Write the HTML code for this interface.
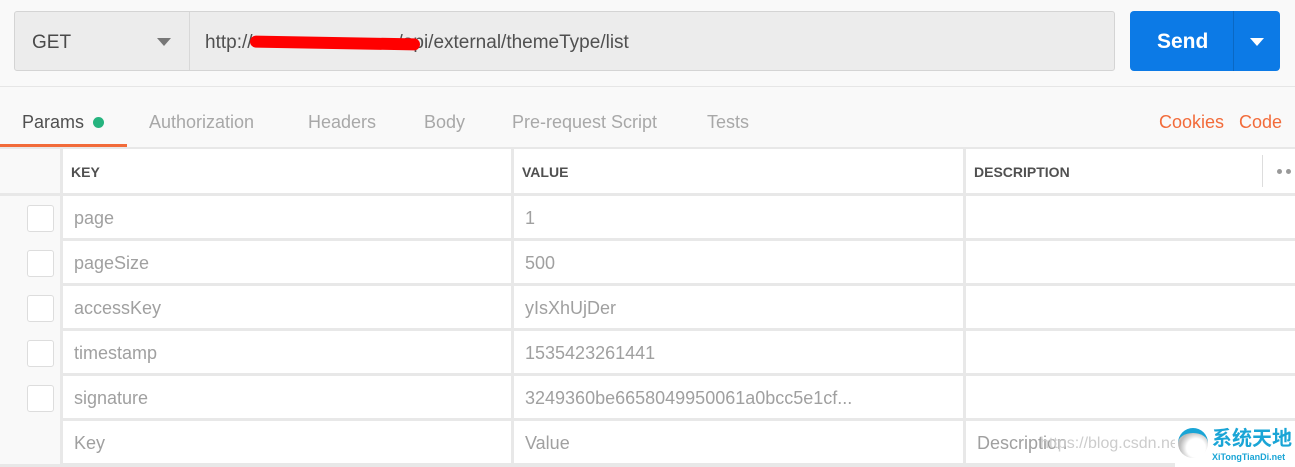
<!DOCTYPE html>
<html><head><meta charset="utf-8"><style>
*{margin:0;padding:0;box-sizing:border-box}
body{width:1295px;height:467px;overflow:hidden;background:#f9f9f9;font-family:"Liberation Sans",sans-serif;position:relative}
.a{position:absolute}
.cell{position:absolute;background:#fff;font-size:18px;color:#a0a0a0;display:flex;align-items:center;padding-left:11px;padding-top:2px}
.hd{font-size:14px;font-weight:bold;color:#505050;padding-left:8px}
.cb{position:absolute;left:27px;width:27px;height:27px;border:1px solid #ddd;border-radius:3px;background:#fff}
.tab{position:absolute;top:112px;font-size:18px;color:#a8a8a8}
</style></head><body>
<div class="a" style="left:14px;top:11px;width:1101px;height:60px;background:#ececec;border:1px solid #d4d4d4;border-radius:3px"></div>
<div class="a" style="left:189px;top:12px;width:1px;height:58px;background:#d8d8d8"></div>
<div class="a" style="left:32px;top:32px;font-size:19px;color:#4a4a4a">GET</div>
<div class="a" style="left:157px;top:38px;border-left:7px solid transparent;border-right:7px solid transparent;border-top:8px solid #777"></div>
<div class="a" style="left:205px;top:32px;font-size:19px;color:#505050">http://<span style="display:inline-block;width:145px"></span>/api/external/themeType/list</div>
<div class="a" style="left:250px;top:37px;width:170px;height:12px;background:#f00;border-radius:6px;transform:rotate(1deg)"></div>
<div class="a" style="left:1130px;top:11px;width:150px;height:60px;background:#0c7ae6;border-radius:4px"></div>
<div class="a" style="left:1233px;top:11px;width:1px;height:60px;background:#0a68c4"></div>
<div class="a" style="left:1157px;top:30px;font-size:21px;font-weight:bold;color:#fff">Send</div>
<div class="a" style="left:1250px;top:38px;border-left:7px solid transparent;border-right:7px solid transparent;border-top:8px solid #fff"></div>
<div class="a" style="left:0;top:86px;width:1295px;height:1px;background:#e6e6e6"></div>
<div class="tab" style="left:22px;color:#505050">Params</div>
<div class="a" style="left:93px;top:117px;width:11px;height:11px;border-radius:50%;background:#26b47f"></div>
<div class="tab" style="left:149px">Authorization</div>
<div class="tab" style="left:308px">Headers</div>
<div class="tab" style="left:424px">Body</div>
<div class="tab" style="left:512px">Pre-request Script</div>
<div class="tab" style="left:707px">Tests</div>
<div class="tab" style="left:1159px;color:#f26b3a">Cookies</div>
<div class="tab" style="left:1239px;color:#f26b3a">Code</div>
<div class="a" style="left:0;top:144px;width:127px;height:3px;background:#f26b3a"></div>
<div class="a" style="left:0;top:147px;width:1295px;height:320px;background:#e8e8e8"></div>
<div class="a" style="left:0;top:149px;width:60px;height:44px;background:#f9f9f9"></div>
<div class="cell hd" style="left:63px;top:149px;width:448px;height:44px">KEY</div>
<div class="cell hd" style="left:514px;top:149px;width:449px;height:44px">VALUE</div>
<div class="cell hd" style="left:966px;top:149px;width:329px;height:44px">DESCRIPTION</div>
<div class="a" style="left:1262px;top:155px;width:1px;height:32px;background:#ddd"></div>
<div class="a" style="left:1277px;top:169px;width:5px;height:5px;border-radius:50%;background:#999"></div>
<div class="a" style="left:1286px;top:169px;width:5px;height:5px;border-radius:50%;background:#999"></div>

<div class="a" style="left:0;top:196px;width:60px;height:268px;background:#f9f9f9"></div>
<div class="cb" style="top:205px"></div><div class="cb" style="top:250px"></div><div class="cb" style="top:295px"></div><div class="cb" style="top:340px"></div><div class="cb" style="top:385px"></div>

<div class="cell" style="left:63px;top:196px;width:448px;height:42px">page</div>
<div class="cell" style="left:514px;top:196px;width:449px;height:42px">1</div>
<div class="cell" style="left:966px;top:196px;width:329px;height:42px"></div>
<div class="cell" style="left:63px;top:241px;width:448px;height:42px">pageSize</div>
<div class="cell" style="left:514px;top:241px;width:449px;height:42px">500</div>
<div class="cell" style="left:966px;top:241px;width:329px;height:42px"></div>
<div class="cell" style="left:63px;top:286px;width:448px;height:42px">accessKey</div>
<div class="cell" style="left:514px;top:286px;width:449px;height:42px">yIsXhUjDer</div>
<div class="cell" style="left:966px;top:286px;width:329px;height:42px"></div>
<div class="cell" style="left:63px;top:331px;width:448px;height:42px">timestamp</div>
<div class="cell" style="left:514px;top:331px;width:449px;height:42px">1535423261441</div>
<div class="cell" style="left:966px;top:331px;width:329px;height:42px"></div>
<div class="cell" style="left:63px;top:376px;width:448px;height:42px">signature</div>
<div class="cell" style="left:514px;top:376px;width:449px;height:42px">3249360be6658049950061a0bcc5e1cf...</div>
<div class="cell" style="left:966px;top:376px;width:329px;height:42px"></div>
<div class="cell" style="left:63px;top:421px;width:448px;height:42px">Key</div>
<div class="cell" style="left:514px;top:421px;width:449px;height:42px">Value</div>
<div class="cell" style="left:966px;top:421px;width:329px;height:42px">Description</div>
<div class="a" style="left:1040px;top:435px;font-size:16px;color:#ccc">https://blog.csdn.ne</div>
<div class="a" style="left:1175px;top:423px;width:120px;height:44px;background:#fff"></div>
<div class="a" style="left:1178px;top:428px;width:30px;height:30px;border-radius:50%;background:radial-gradient(circle at 60% 60%,#fff 40%,#bbb 70%);border-top:5px solid #1aa5d6"></div>
<div class="a" style="left:1212px;top:426px;font-size:20px;font-weight:bold;color:#1aa5d6;font-family:'Noto Sans CJK SC',sans-serif;line-height:22px">系统天地</div>
<div class="a" style="left:1212px;top:452px;font-size:9px;font-weight:bold;color:#1aa5d6">XiTongTianDi.net</div>
</body></html>
